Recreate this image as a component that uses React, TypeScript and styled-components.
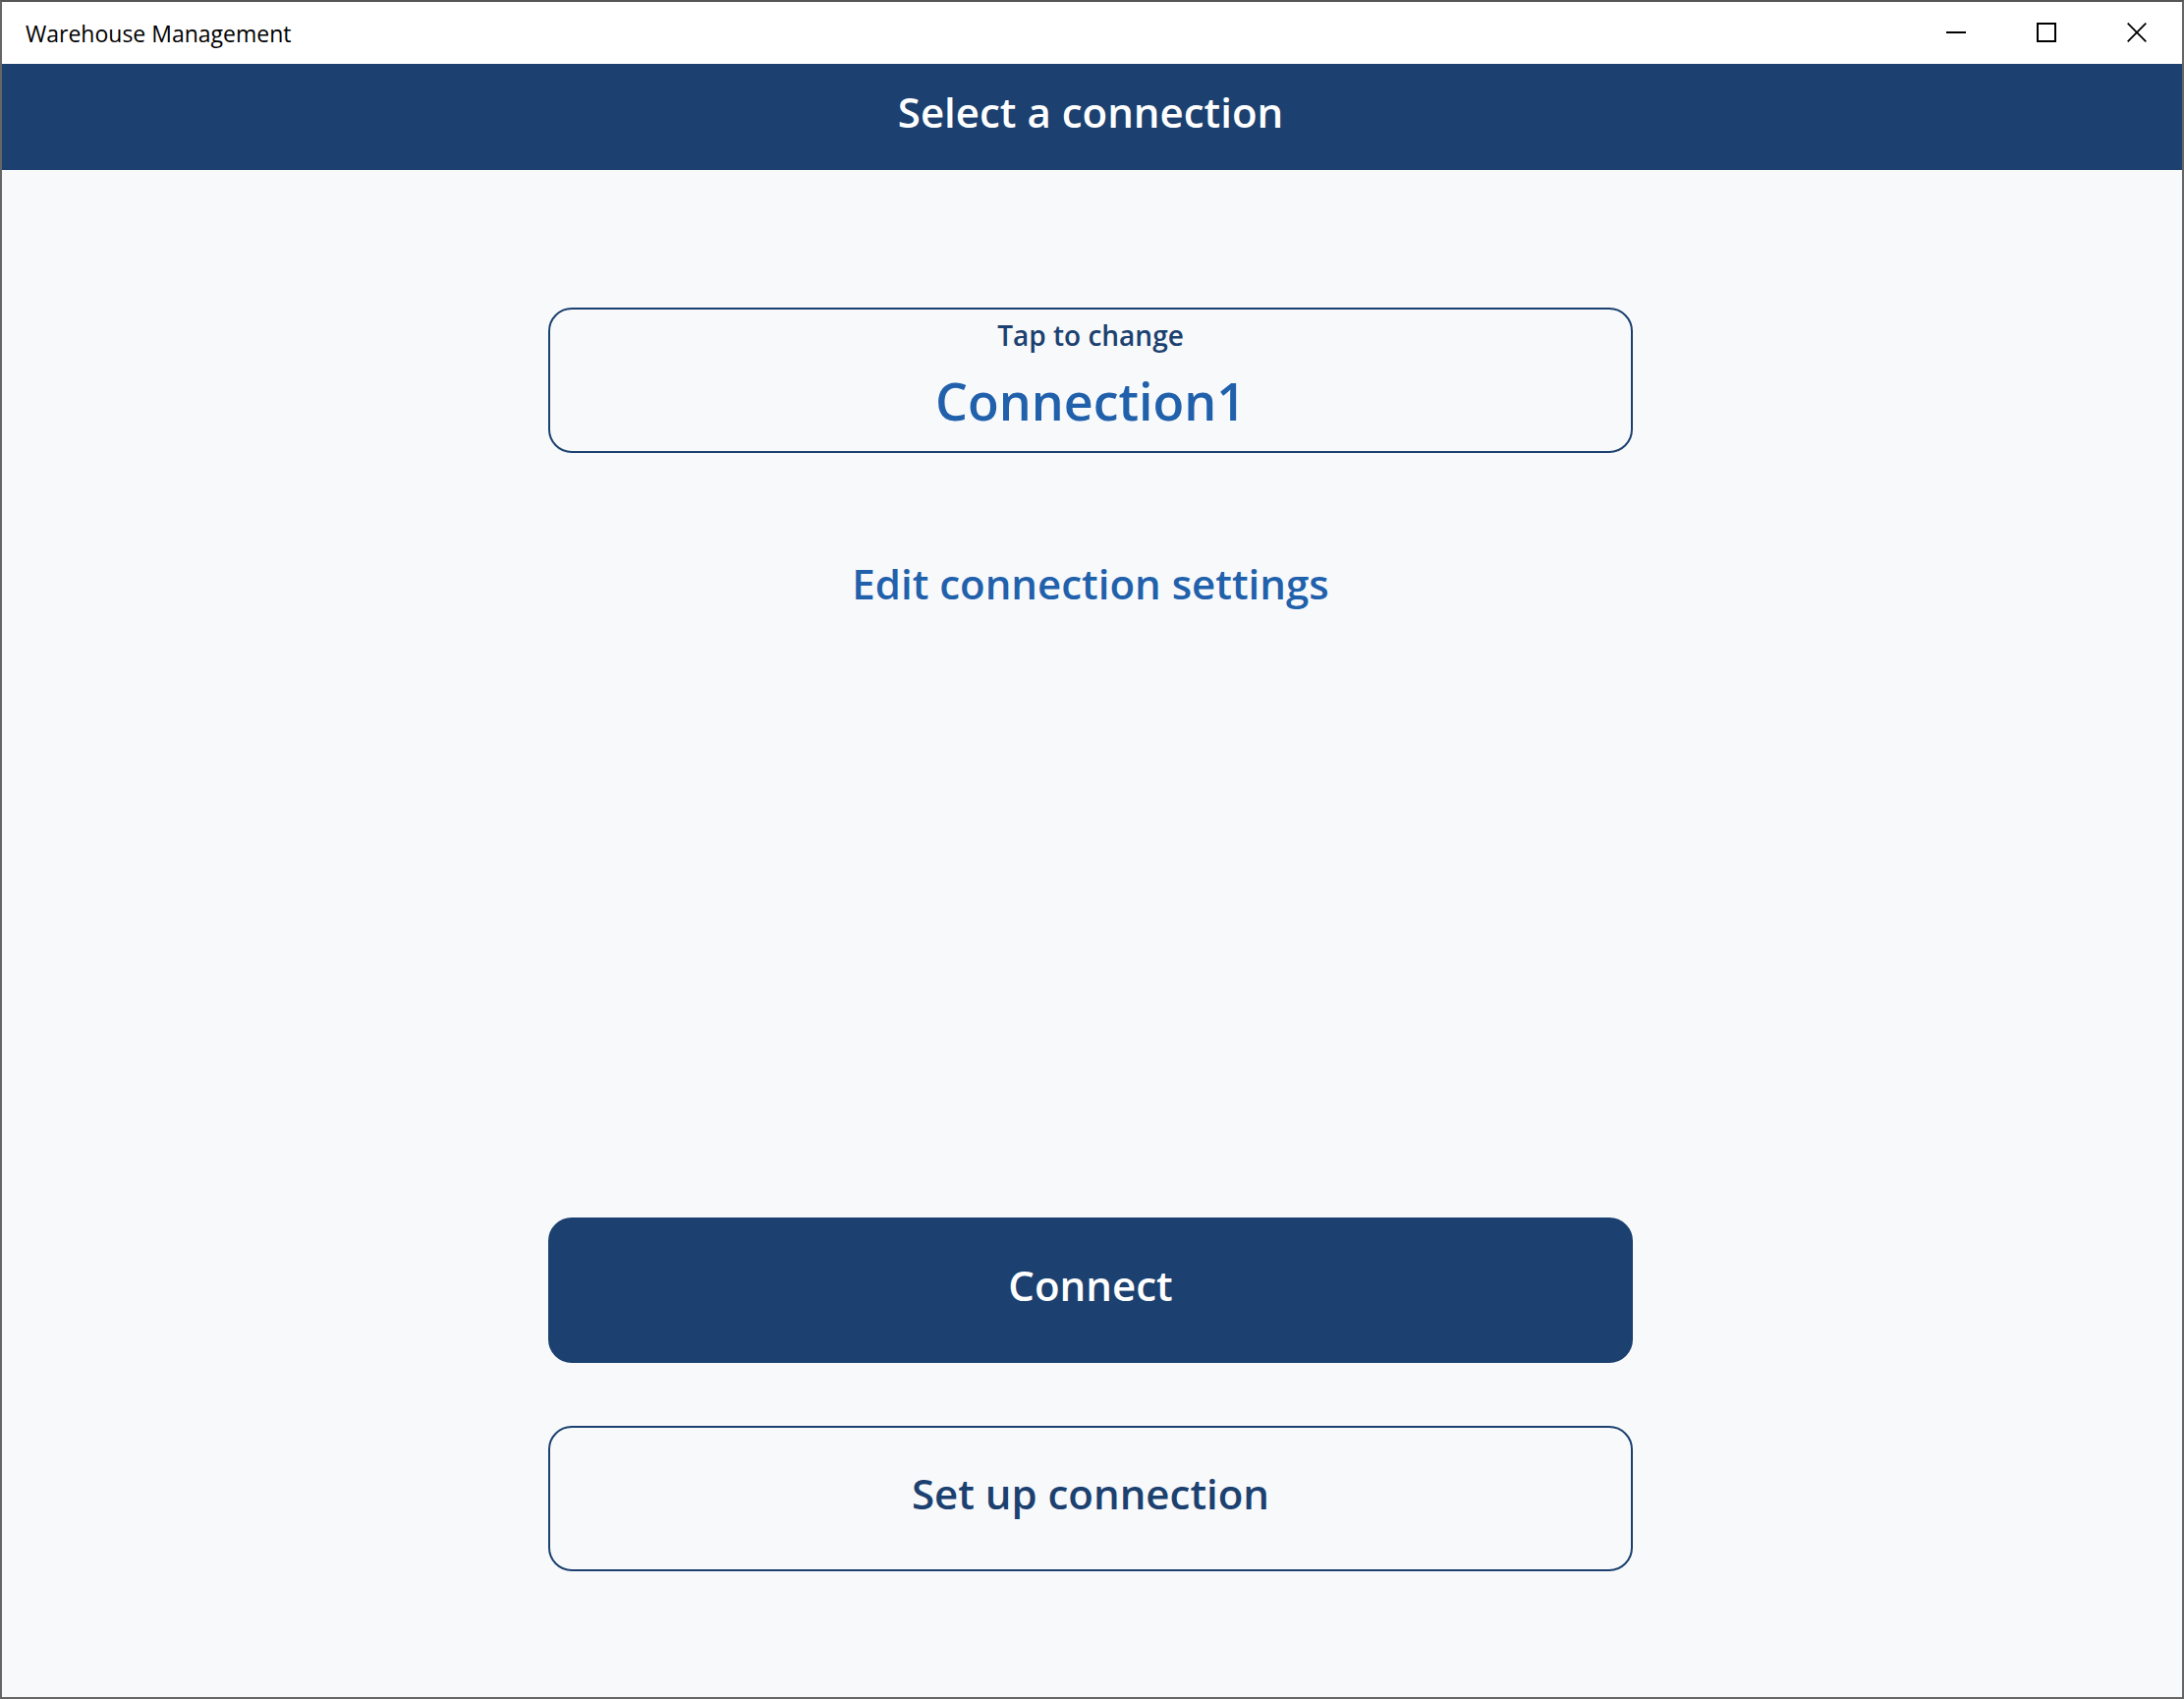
import React from "react";
import styled, { createGlobalStyle, css } from "styled-components";

const navy = "#1c4170";
const blue = "#2161ac";
const surface = "#f8f9fb";

const GlobalStyle = createGlobalStyle`
  *, *::before, *::after { box-sizing: border-box; }
  body {
    margin: 0;
    font-family: "Segoe UI", "Open Sans", "Noto Sans", sans-serif;
    background: ${surface};
  }
  button { font-family: inherit; cursor: pointer; }
`;

const Window = styled.div`
  display: flex;
  flex-direction: column;
  min-height: 100vh;
  border: 2px solid #666;
  border-top-color: #555;
  background: ${surface};
`;

const TitleBar = styled.div`
  display: flex;
  justify-content: space-between;
  height: 63px;
  padding-left: 24px;
  background: #fff;
`;

const AppName = styled.span`
  align-self: center;
  font-size: 23px;
  line-height: 32px;
  color: #000;
`;

const WindowControls = styled.div`
  display: flex;
`;

const WindowButton = styled.button`
  display: flex;
  align-items: center;
  justify-content: center;
  width: 92px;
  height: 62px;
  padding: 0;
  border: 0;
  background: transparent;
  color: #000;
`;

const Header = styled.header`
  display: flex;
  align-items: center;
  justify-content: center;
  height: 108px;
  padding: 0 3px 10px 0;
  background: ${navy};
  color: #fff;
`;

const Heading = styled.h1`
  margin: 0;
  font-size: 42px;
  font-weight: 600;
  line-height: 56px;
`;

const Main = styled.main`
  flex: 1;
  display: flex;
  flex-direction: column;
  align-items: center;
  gap: 64px;
  padding: 140px 3px 128px 0;
`;

const Group = styled.div`
  display: flex;
  flex-direction: column;
  gap: 64px;
  width: 100%;
  max-width: 1104px;
`;

const Actions = styled(Group)`
  margin-top: auto;
`;

type Variant = "filled" | "outlined" | "plain";

const variants = {
  filled: css`
    background: ${navy};
    border-color: ${navy};
    color: #fff;
  `,
  outlined: css`
    border-color: ${navy};
    color: ${navy};
  `,
  plain: css`
    color: ${blue};
  `,
};

const Button = styled.button<{ $variant: Variant }>`
  display: flex;
  flex-direction: column;
  align-items: center;
  justify-content: center;
  width: 100%;
  height: 148px;
  padding: 0 0 10px;
  border: 2px solid transparent;
  border-radius: 24px;
  background: transparent;
  font-size: 42px;
  font-weight: 600;
  line-height: 56px;
  ${({ $variant }) => variants[$variant]}
`;

const Hint = styled.span`
  font-size: 28px;
  line-height: 52px;
`;

const ConnectionName = styled.span`
  font-size: 52px;
  line-height: 82px;
  color: ${blue};
`;

export default function App() {
  return (
    <>
      <GlobalStyle />
      <Window>
        <TitleBar>
          <AppName>Warehouse Management</AppName>
          <WindowControls>
            <WindowButton aria-label="Minimize">
              <svg width="20" height="20" viewBox="0 0 20 20">
                <path d="M0 10H20" stroke="currentColor" strokeWidth="2" />
              </svg>
            </WindowButton>
            <WindowButton aria-label="Maximize">
              <svg width="20" height="20" viewBox="0 0 20 20">
                <rect x="1" y="1" width="18" height="18" fill="none" stroke="currentColor" strokeWidth="2" />
              </svg>
            </WindowButton>
            <WindowButton aria-label="Close">
              <svg width="20" height="20" viewBox="0 0 20 20">
                <path d="M.7 .7L19.3 19.3M19.3 .7L.7 19.3" stroke="currentColor" strokeWidth="1.8" />
              </svg>
            </WindowButton>
          </WindowControls>
        </TitleBar>
        <Header>
          <Heading>Select a connection</Heading>
        </Header>
        <Main>
          <Group>
            <Button $variant="outlined">
              <Hint>Tap to change</Hint>
              <ConnectionName>Connection1</ConnectionName>
            </Button>
            <Button $variant="plain">Edit connection settings</Button>
          </Group>
          <Actions>
            <Button $variant="filled">Connect</Button>
            <Button $variant="outlined">Set up connection</Button>
          </Actions>
        </Main>
      </Window>
    </>
  );
}
